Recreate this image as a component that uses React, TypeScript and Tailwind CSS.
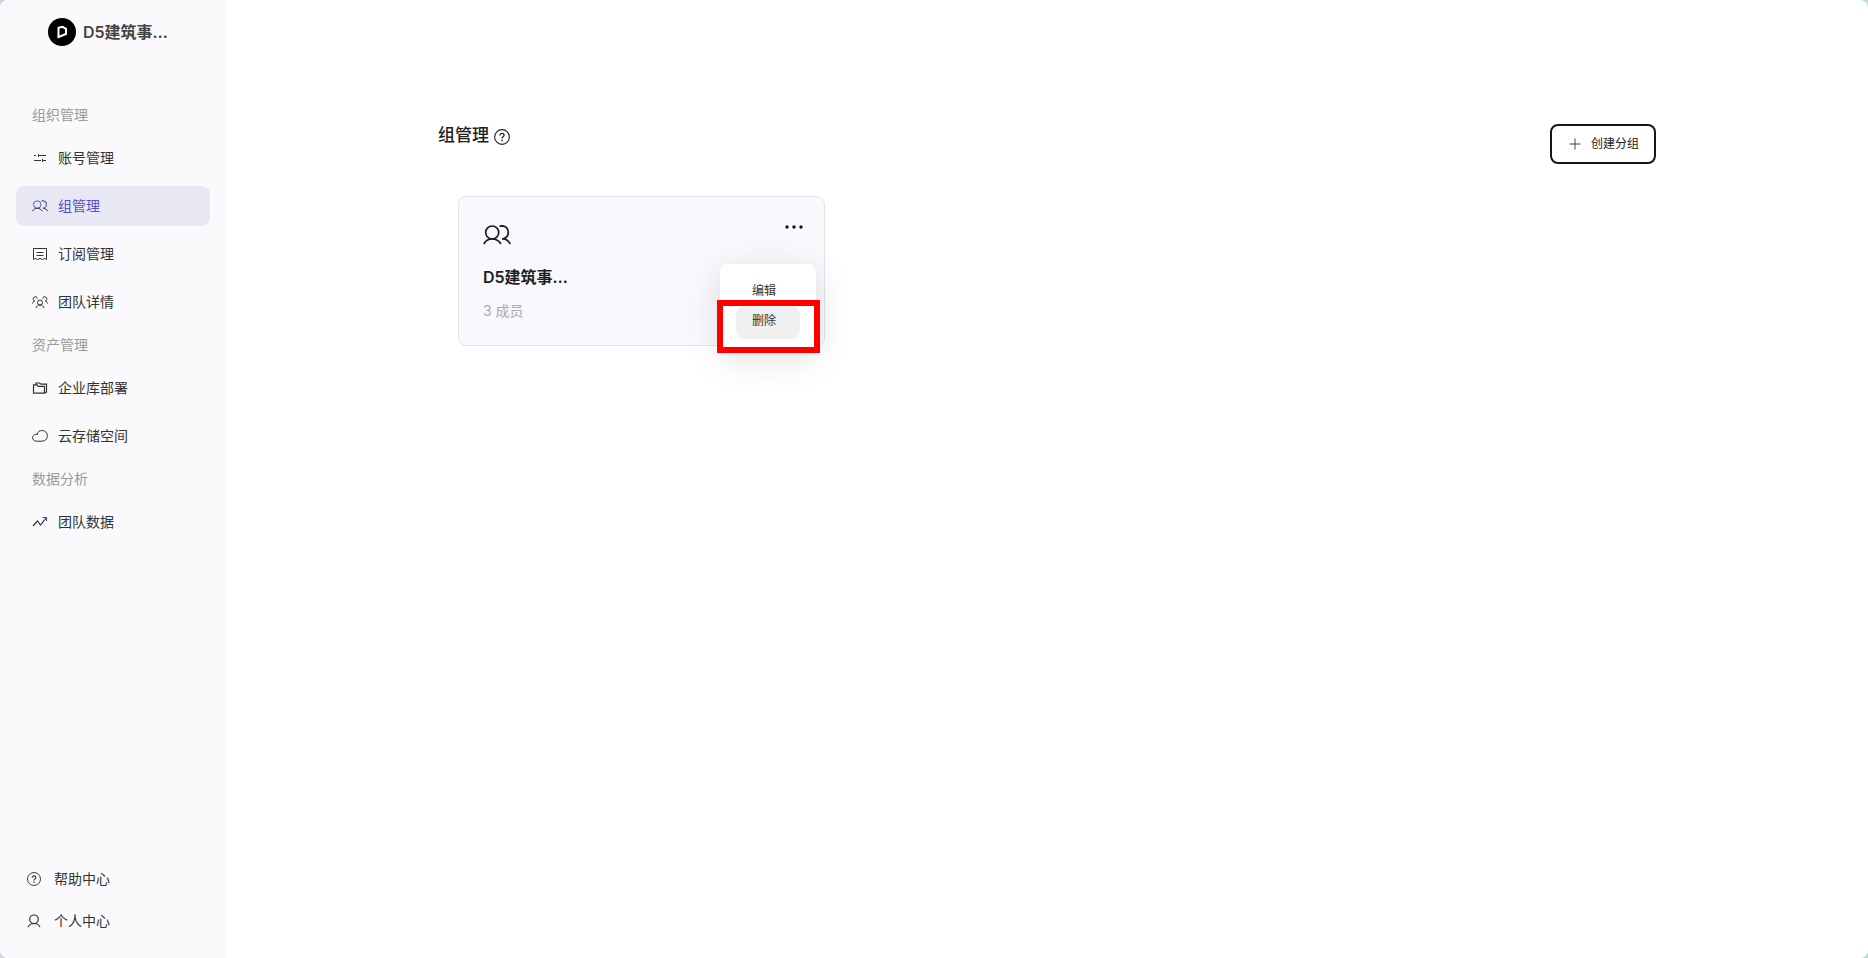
import type { ReactNode } from "react";

const UsersIcon = ({ className, accent }: { className?: string; accent?: string }) => (
  <svg viewBox="0 0 28 20" fill="none" stroke="currentColor" strokeWidth="1.7" className={className}>
    <circle cx="9.2" cy="7.5" r="6.5" stroke={accent ?? "currentColor"} />
    <path d="M0.8 19c1.600-3.200 4.800-5 8.400-5s6.800 1.800 8.700 5" />
    <path d="M16.500 1.200c1-.3 2-.4 3-.4a6.300 6.300 0 0 1 5.800 6.500c0 3.200-1.800 5.500-4.800 6.500h-1.500M20.500 13.800c3 .4 5.400 2.200 6.700 5.200" />
  </svg>
);

const HelpIcon = ({ className }: { className?: string }) => (
  <svg viewBox="0 0 16 16" fill="none" stroke="currentColor" strokeWidth="1.100" className={className}>
    <circle cx="8" cy="8" r="7.400" />
    <path d="M5.900 6.500C5.900 5.200 6.800 4.400 8 4.400s2.100.8 2.100 1.900c0 1.500-2.100 1.600-2.100 3.300" strokeWidth="1.300" />
    <path d="M8 10.800v1.400" strokeWidth="1.500" />
  </svg>
);

const icons: Record<string, ReactNode> = {
  account: (
    <svg viewBox="0 0 16 16" fill="none" stroke="currentColor" className="size-4">
      <path d="M2 5.500h2M6 5.500h8M6.500 4v3M2 10.500h7M11 10.500h3M10.500 9v3" />
    </svg>
  ),
  group: <UsersIcon accent="#5450c8" className="h-3 w-4 text-[#2b2b3a]" />,
  order: (
    <svg viewBox="0 0 16 16" fill="none" stroke="currentColor" className="size-4">
      <path d="M1.500 2.500h13v11l-2-1-2 1-2.500-1-2.500 1-2-1-2 1zM4.500 6.500h7M4.500 9.500h7" />
    </svg>
  ),
  team: (
    <svg viewBox="0 0 16 16" fill="none" stroke="currentColor" className="size-4">
      <circle cx="8" cy="8.500" r="2.500" />
      <path d="M4 14c.5-2 2-3 4-3s3.500 1 4 3M5.500 4.500A2.200 2.200 0 1 0 2.500 7M.6 9.500C.8 8 1.500 7.200 2.800 7M10.500 4.500a2.200 2.200 0 1 1 3 2.500M15.400 9.500c-.2-1.500-.9-2.300-2.200-2.500" />
    </svg>
  ),
  folder: (
    <svg viewBox="0 0 16 16" fill="none" stroke="currentColor" strokeWidth="1.200" className="size-4">
      <path d="M1.500 13.200V4.800h3.500l1.500 1.500h6v6.900zM4 4.500V3h3.500L9 4.200h5.500v8l-2 1" />
    </svg>
  ),
  cloud: (
    <svg viewBox="0 0 16 16" fill="none" stroke="currentColor" className="size-4">
      <path d="M5.300 6.200A4.600 4.600 0 0 1 10.300 2.600a5 5 0 0 1 5.100 5c0 3.200-2.200 5.600-5.200 5.600H4.300C2.200 13.200.6 11.700.6 9.700s1.500-3.500 3.600-3.500c.8 0 1.500.2 2 .5" />
    </svg>
  ),
  trend: (
    <svg viewBox="0 0 16 16" fill="none" stroke="currentColor" strokeWidth="1.200" className="size-4">
      <path d="M1 12l4.500-5 3 4L14 4" />
      <path d="M10.500 3.500h4V7" stroke="#4a46c0" />
    </svg>
  ),
};

const sections = [
  {
    title: "组织管理",
    items: [
      { icon: "account", label: "账号管理" },
      { icon: "group", label: "组管理", active: true },
      { icon: "order", label: "订阅管理" },
      { icon: "team", label: "团队详情" },
    ],
  },
  {
    title: "资产管理",
    items: [
      { icon: "folder", label: "企业库部署" },
      { icon: "cloud", label: "云存储空间" },
    ],
  },
  { title: "数据分析", items: [{ icon: "trend", label: "团队数据" }] },
];

function Sidebar() {
  return (
    <aside className="flex w-[226px] shrink-0 flex-col bg-[#fafafc] text-sm text-[#333]">
      <div className="flex items-center gap-[7px] pt-[18px] pl-12">
        <svg viewBox="0 0 28 28" className="size-7">
          <circle cx="14" cy="14" r="14" fill="#000" />
          <path d="M10.500 9.800v9.200l7.500-3V10.800L14.500 8.800z" fill="none" stroke="#fff" strokeWidth="2" />
        </svg>
        <span className="text-base font-semibold text-[#444]">D5建筑事…</span>
      </div>
      <nav className="mt-[50px] px-4">
        {sections.map((section) => (
          <div key={section.title}>
            <h2 className="flex h-[38px] items-center pl-4 text-[#999]">{section.title}</h2>
            <ul>
              {section.items.map((item) => (
                <li key={item.label} className="py-1">
                  <a
                    href="#"
                    className={`flex h-10 items-center gap-[10px] rounded-lg px-4 ${
                      item.active ? "bg-[#e8e8f5] text-[#5450c8]" : ""
                    }`}
                  >
                    {icons[item.icon]}
                    {item.label}
                  </a>
                </li>
              ))}
            </ul>
          </div>
        ))}
      </nav>
      <div className="mt-auto flex flex-col gap-[22px] pb-[27px] pl-[26px]">
        <a href="#" className="flex items-center gap-3">
          <HelpIcon className="size-4 p-px" />
          帮助中心
        </a>
        <a href="#" className="flex items-center gap-3">
          <svg viewBox="0 0 16 16" fill="none" stroke="currentColor" strokeWidth="1.200" className="size-4">
            <circle cx="8" cy="6.300" r="4.300" />
            <path d="M2 14c1-2.200 3.200-3.500 6-3.500s5 1.300 6 3.500" />
          </svg>
          个人中心
        </a>
      </div>
    </aside>
  );
}

function GroupCard() {
  return (
    <article className="relative ml-5 h-[150px] w-[367px] rounded-lg border border-[#e3e3ea] bg-[#f8f8fd] pt-[28px] pl-6">
      <UsersIcon className="h-5 w-7 text-[#1a1a22]" />
      <h2 className="mt-5 text-base leading-6 font-semibold text-[#1c1f23]">D5建筑事…</h2>
      <p className="mt-3 text-sm leading-5 text-[#aaaab2]">3 成员</p>
      <button type="button" aria-label="更多" className="absolute top-[22px] right-5 text-[#111]">
        <svg viewBox="0 0 20 16" fill="currentColor" className="h-4 w-5">
          <circle cx="3" cy="8" r="1.700" />
          <circle cx="10" cy="8" r="1.700" />
          <circle cx="17" cy="8" r="1.700" />
        </svg>
      </button>
      <div className="absolute top-[67px] right-2 flex w-24 flex-col rounded-lg bg-white px-4 py-[11px] text-xs text-[#333] shadow-[0_8px_36px_rgba(0,0,0,0.13)]">
        <button type="button" className="h-8 rounded-lg pr-2 text-center">
          编辑
        </button>
        <button type="button" className="h-8 rounded-lg bg-[#f0f0f0] pr-2 pb-1 text-center">
          删除
        </button>
      </div>
      <div className="absolute top-[103px] right-1 h-[53px] w-[103px] border-6 border-[#ff0000]" />
    </article>
  );
}

export default function App() {
  return (
    <div className="h-screen bg-[#bfd9dc] font-[Inter,'Noto_Sans_CJK_SC',sans-serif]">
      <div className="flex h-full overflow-hidden rounded-lg bg-white">
        <Sidebar />
        <main className="min-w-0 flex-1 px-5 pt-[124px]">
          <div className="mx-auto max-w-[1218px]">
            <header className="flex items-start justify-between">
              <div className="flex items-center gap-[5px] text-[#222]">
                <h1 className="text-[17px] leading-[22px] font-medium">组管理</h1>
                <HelpIcon className="mt-1 size-4" />
              </div>
              <button
                type="button"
                className="flex h-10 w-[106px] items-center justify-center gap-2 rounded-lg border-2 border-[#15181c] text-xs text-[#222]"
              >
                <svg viewBox="0 0 16 16" fill="none" stroke="#444" className="size-4">
                  <path d="M8 2.500v11M2.500 8h11" />
                </svg>
                创建分组
              </button>
            </header>
            <section className="mt-8">
              <GroupCard />
            </section>
          </div>
        </main>
      </div>
    </div>
  );
}
